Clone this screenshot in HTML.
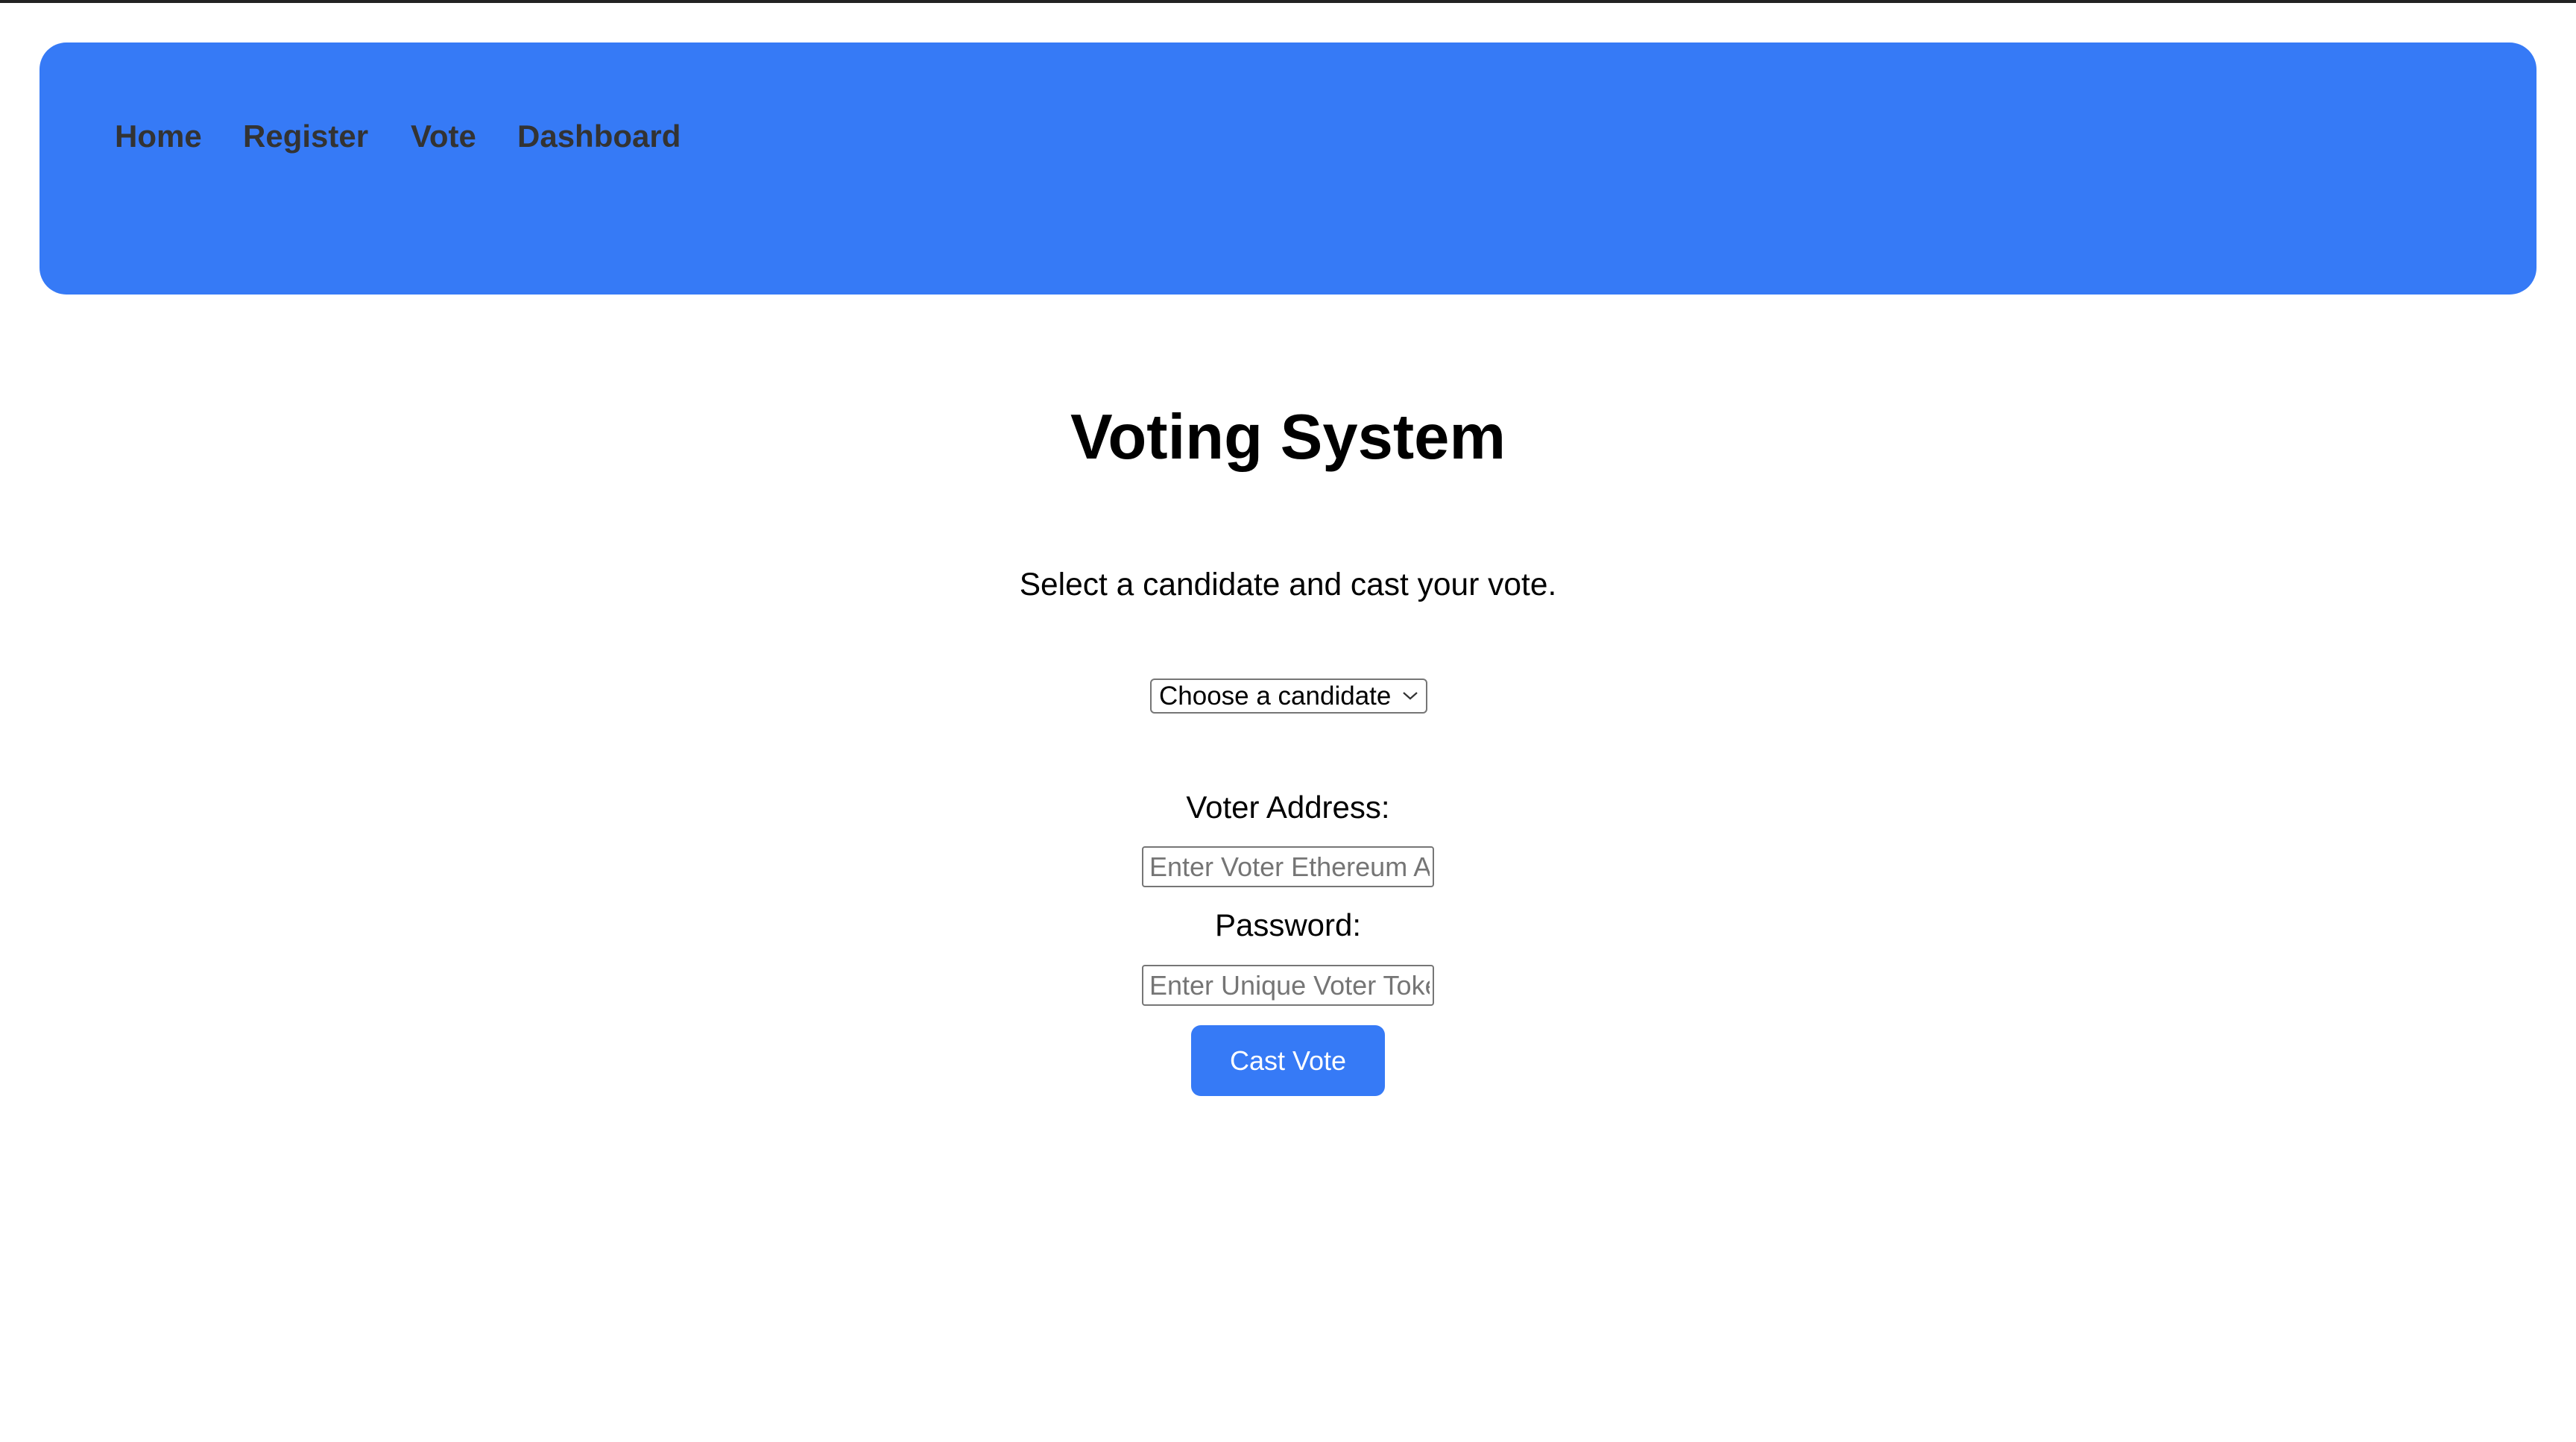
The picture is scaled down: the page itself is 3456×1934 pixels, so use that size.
<!DOCTYPE html>
<html><head><meta charset="utf-8"><style>
html,body{margin:0;padding:0;background:#fff;width:3456px;height:1934px;overflow:hidden;font-family:"Liberation Sans",Arial,sans-serif;}
.top{position:absolute;left:0;top:0;width:3456px;height:4px;background:#222;}
.nav{position:absolute;left:53px;top:57px;width:3350px;height:338px;background:#367af6;border-radius:36px;}
.nl{position:absolute;top:162px;font-size:42px;line-height:42px;font-weight:bold;color:#333;}
.t{position:absolute;left:0;width:3456px;text-align:center;color:#000;}
.box{position:absolute;box-sizing:border-box;border:2px solid #767676;background:#fff;border-radius:4px;}
.ph{position:absolute;left:8px;top:0;font-size:36px;line-height:51px;color:#757575;white-space:nowrap;overflow:hidden;right:4px;}
</style></head><body>
<div class="top"></div>
<div class="nav"></div>
<div class="nl" style="left:154px">Home</div>
<div class="nl" style="left:326px">Register</div>
<div class="nl" style="left:551px">Vote</div>
<div class="nl" style="left:694px">Dashboard</div>
<div class="t" style="top:544px;font-size:85px;line-height:85px;font-weight:bold;">Voting System</div>
<div class="t" style="top:764px;font-size:42.5px;line-height:42px;">Select a candidate and cast your vote.</div>
<div class="box" style="left:1543px;top:910px;width:372px;height:47px;border-radius:6px;">
<div style="position:absolute;left:10px;top:0;font-size:35px;line-height:43px;color:#000;white-space:nowrap">Choose a candidate</div>
<svg style="position:absolute;right:10px;top:14px" width="22" height="14" viewBox="0 0 22 14"><path d="M2 3 L11 11 L20 3" fill="none" stroke="#333" stroke-width="2.2"/></svg>
</div>
<div class="t" style="top:1062px;font-size:42px;line-height:42px;">Voter Address:</div>
<div class="box" style="left:1532px;top:1135px;width:392px;height:55px;"><div class="ph">Enter Voter Ethereum Address</div></div>
<div class="t" style="top:1220px;font-size:42px;line-height:42px;">Password:</div>
<div class="box" style="left:1532px;top:1294px;width:392px;height:55px;"><div class="ph">Enter Unique Voter Token</div></div>
<div style="position:absolute;left:1598px;top:1375px;width:260px;height:95px;background:#367af6;border-radius:13px;color:#fff;font-size:36px;line-height:95px;text-align:center;">Cast Vote</div>
</body></html>
